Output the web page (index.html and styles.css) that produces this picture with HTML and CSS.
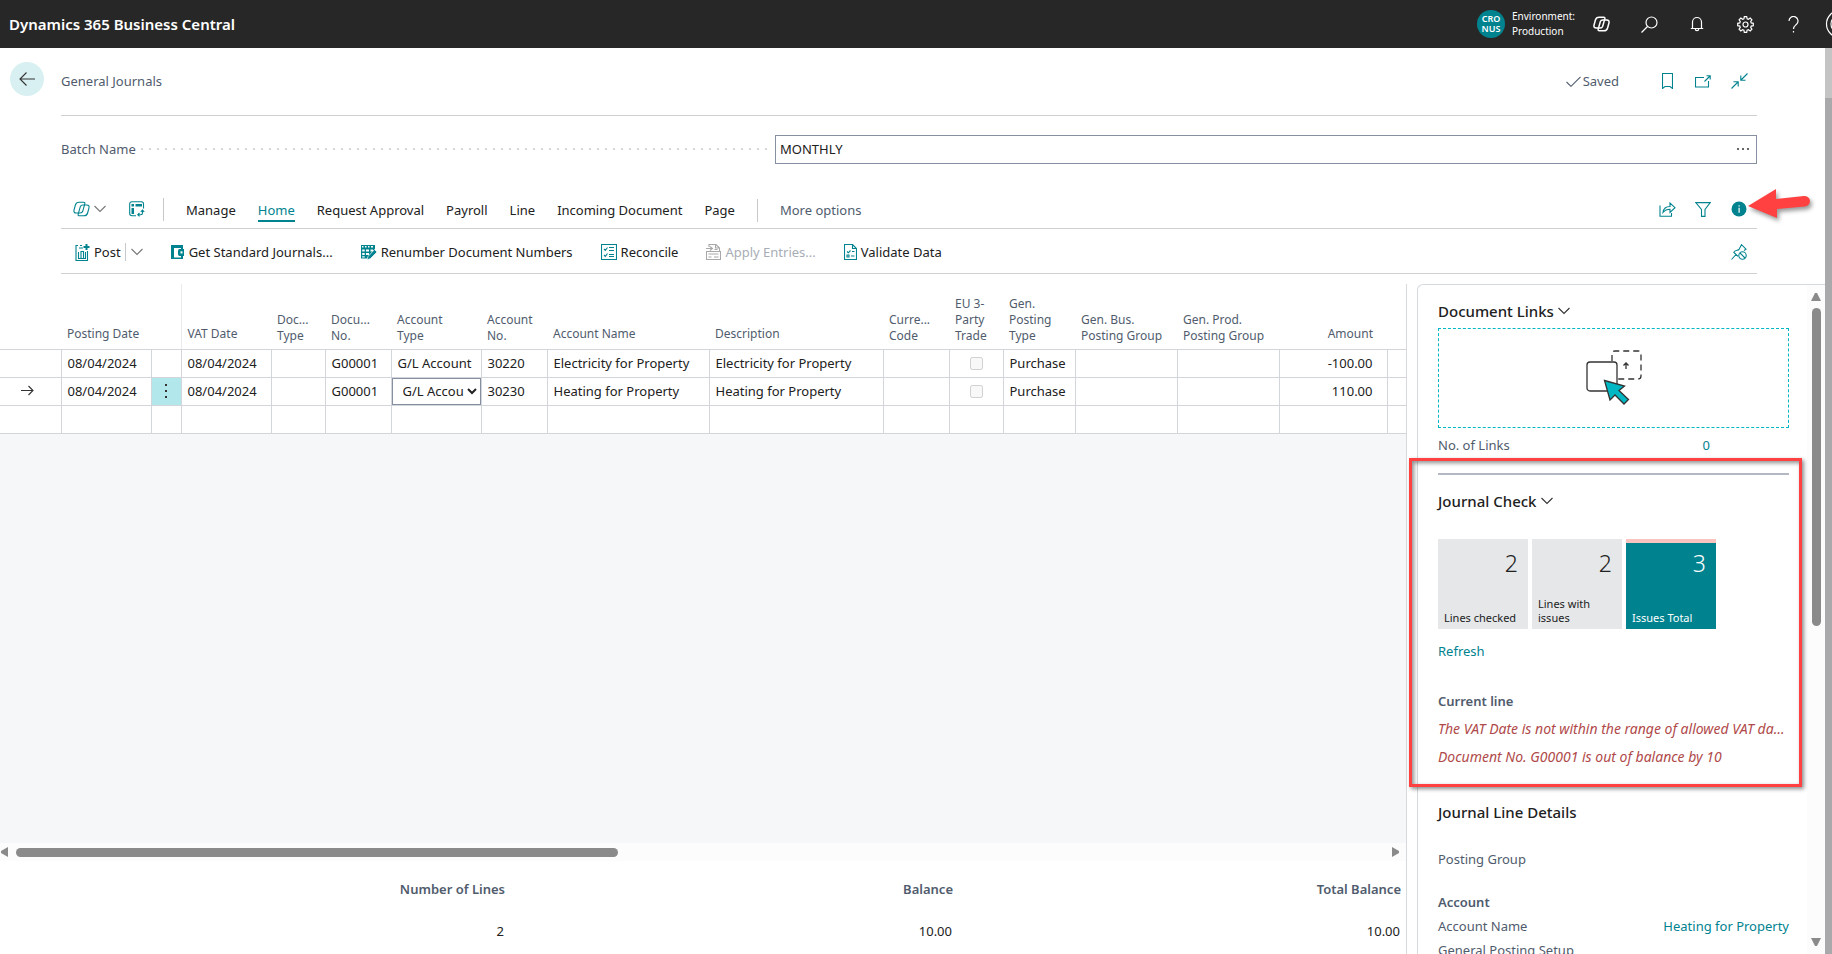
FILE: index.html
```html
<!DOCTYPE html>
<html lang="en">
<head>
  <meta charset="UTF-8" />
  <title>General Journals - Dynamics 365 Business Central</title>
  <link rel="stylesheet" href="styles.css">
</head>
<body>
  <svg class="defs" width="0" height="0" aria-hidden="true">
    <symbol id="copilot" viewBox="0 0 17 16">
      <path d="M6 1.2h4.6q1.7 0 1.2 1.7l-2.1 7.4Q9.1 12 7.2 12H3.2Q.5 12 1 9.2L2.4 4Q3.2 1.2 6 1.2z"/>
      <path transform="rotate(180 8.5 8)" d="M6 1.2h4.6q1.7 0 1.2 1.7l-2.1 7.4Q9.1 12 7.2 12H3.2Q.5 12 1 9.2L2.4 4Q3.2 1.2 6 1.2z"/>
    </symbol>
    <symbol id="chevron" viewBox="0 0 12 8"><path d="M.5 1L6 6.5 11.5 1"/></symbol>
  </svg>

  <header class="topbar">
    <a class="brand" href="#">Dynamics 365 Business Central</a>
    <div class="environment">
      <span class="company">CRO<br>NUS</span>
      <span>Environment:<br>Production</span>
    </div>
    <nav class="top-tools">
      <button aria-label="Copilot"><svg class="icon thick" width="17" height="16"><use href="#copilot"/></svg></button>
      <button aria-label="Search"><svg class="icon" width="17" height="17" viewBox="0 0 17 17"><circle cx="10.5" cy="6.5" r="5.5"/><path d="M6.5 10.5l-6 6"/></svg></button>
      <button aria-label="Notifications"><svg class="icon" width="14" height="16" viewBox="0 0 14 16"><path d="M2.500 12V6a4.500 4.500 0 0 1 9 0v6M.8 12.500h12.400M5.300 13a1.700 1.700 0 0 0 3.400 0"/></svg></button>
      <button aria-label="Settings"><svg class="icon" width="17" height="17" viewBox="0 0 17 17"><path d="M7.300.7h2.400l.4 2.100 1.300.5 1.800-1.200 1.700 1.700-1.200 1.800.5 1.300 2.100.4v2.400l-2.100.4-.5 1.300 1.200 1.800-1.700 1.700-1.800-1.200-1.300.5-.4 2.100H7.300l-.4-2.100-1.300-.5-1.800 1.200-1.700-1.700 1.200-1.800-.5-1.300-2.100-.4V7.300l2.100-.4.5-1.300-1.200-1.800 1.700-1.700 1.800 1.200 1.300-.5z"/><circle cx="8.5" cy="8.5" r="2.5"/></svg></button>
      <button aria-label="Help"><svg class="icon" width="11" height="17" viewBox="0 0 11 17"><path d="M1 5a4.500 4.500 0 1 1 7.500 3.300C6.500 10 5.500 10.500 5.500 13M5.500 15v1.500"/></svg></button>
      <button aria-label="Account"><svg class="icon" width="32" height="28" viewBox="0 0 32 28"><circle cx="15" cy="14" r="13.5"/><circle cx="15" cy="14" r="9"/></svg></button>
    </nav>
  </header>

  <div class="shell">
    <main class="page">
      <div class="page-head">
        <button class="back" aria-label="Back"><svg class="icon dark" width="16" height="14" viewBox="0 0 16 14"><path d="M7.500.5L1 7l6.500 6.500M1 7h15"/></svg></button>
        <h1>General Journals</h1>
        <span class="saved"><svg class="icon" width="15" height="11" viewBox="0 0 15 11"><path d="M.5 6L5 10.300 14.500.8"/></svg>Saved</span>
        <div class="side-tools">
          <button aria-label="Bookmark"><svg class="icon" width="11" height="16" viewBox="0 0 11 16"><path d="M.5.5h10v15L8 13.500H3L.5 15.500z"/></svg></button>
          <button aria-label="Open in new window"><svg class="icon" width="16" height="13" viewBox="0 0 16 13"><path d="M9 2.500H.5v9.500h13V6M9.500 6.500l5.500-5.500M11.500.8h3.700v3.700"/></svg></button>
          <button aria-label="Collapse"><svg class="icon" width="17" height="16" viewBox="0 0 17 16"><path d="M16.500.5L10 7M9.800 2.500v4.700h4.700M.5 15.500L7 9M2.500 8.800h4.700v4.700"/></svg></button>
        </div>
      </div>

      <div class="batch">
        <label for="batchName">Batch Name</label>
        <span class="dots"></span>
        <div class="lookup">
          <input type="text" id="batchName" value="MONTHLY">
          <button aria-label="Choose batch"><svg width="12" height="2" viewBox="0 0 12 2"><circle cx="1" cy="1" r="1"/><circle cx="6" cy="1" r="1"/><circle cx="11" cy="1" r="1"/></svg></button>
        </div>
      </div>

      <nav class="menu">
        <button class="copilot-menu" aria-label="Copilot actions"><svg class="icon" width="17" height="16"><use href="#copilot"/></svg><svg class="icon grey" width="12" height="8"><use href="#chevron"/></svg></button>
        <button class="layout-button" aria-label="Analyze"><svg class="icon" width="16" height="16" viewBox="0 0 16 16"><path d="M14.500 7.500V3q0-2.300-2.300-2.300H3Q.7.700.7 3v9.500q0 2.200 2.300 2.200h4M13.500 9.500V12q0 1.700-1.700 1.700H9M11.800 10.800l1.700-1.700 1.700 1.700M10.500 12l-1.700 1.700 1.700 1.700"/><path class="solid" d="M2.500 3H5v2.500H2.500zM6.500 3H13v2.500H6.500zM2.500 7H5v6H2.500z"/></svg></button>
        <span class="divider"></span>
        <div class="tabs">
          <button>Manage</button>
          <button class="active">Home</button>
          <button>Request Approval</button>
          <button>Payroll</button>
          <button>Line</button>
          <button>Incoming Document</button>
          <button>Page</button>
          <span class="divider"></span>
          <button class="more">More options</button>
        </div>
        <div class="side-tools">
          <button aria-label="Share"><svg class="icon" width="17" height="15" viewBox="0 0 17 15"><path d="M1 3.500v10.800h11.500V11M4 10.500C4.500 6.500 7 4.500 11 4.500V1l5 4.700-5 4.800V7.300C8 7.300 6 8 4 10.500z"/></svg></button>
          <button aria-label="Filter"><svg class="icon" width="16" height="15" viewBox="0 0 16 15"><path d="M.7.6h14.600L10 7.500v6.900H6.500V7.500z"/></svg></button>
          <button aria-label="Details pane"><svg width="16" height="16" viewBox="0 0 16 16"><circle cx="8" cy="8" r="7.5"/><path fill="#fff" d="M7.500 4.300h1.200v1.300H7.500zM7.500 6.800h1.200v5H7.500z"/></svg></button>
        </div>
        <svg class="pointer" width="72" height="38" viewBox="0 0 72 38"><path fill="#ff4141" d="M2 20L30 3v10l28-3q5 0 6 4.500 0 5-5 6L31 23v9z"/></svg>
      </nav>

      <div class="actions">
        <div class="split">
          <button class="action"><svg class="icon" width="15" height="17" viewBox="0 0 15 17"><path d="M3 1.500H1v15h11.500V7M5 1.500h2M4 4h4M3.500 14.500V8M6 14V7.500h2.500V14M10.500 8v6.500M3 14.500h8"/><path stroke-width="2" d="M11.500 0v6M8.500 3h6"/></svg>Post</button>
          <span class="divider"></span>
          <button class="more-post" aria-label="More posting actions"><svg class="icon grey" width="12" height="8"><use href="#chevron"/></svg></button>
        </div>
        <button class="action"><svg width="14" height="15" viewBox="0 0 14 15"><path fill-rule="evenodd" d="M0 0h12v4h1v7h-1v3H0zM3 3v9.500h7V11H8.500Q7 11 7 9V6q0-2 1.500-2H10V3z"/><path fill="#fff" d="M9.500 6.300h2v2.200h-2z"/></svg>Get Standard Journals...</button>
        <button class="action"><svg width="16" height="15" viewBox="0 0 16 15"><path fill-rule="evenodd" d="M0 0h14v6l-6 7.500H0zM1 1v1.500h1.500V1zM4 1v1.500h1.500V1zM7 1v1.500h1.500V1zM10 1v1.500h2V1zM1.200 4.500v2h2.500v-2zM5 4.500v2h3v-2zM9.500 4.500v2H12v-2zM1.200 8v2h2.500V8zM5 8v2h3V8zM1.200 11.200v1.300h2.500v-1.300z"/><path d="M13.500 4.500L16 7l-6.500 6.500L6 15l1-3.500z" stroke="#fff" stroke-width=".7"/></svg>Renumber Document Numbers</button>
        <button class="action"><svg class="icon" width="16" height="16" viewBox="0 0 16 16"><path d="M.5.5h15v15H.5zM8 3.500h5M8 6.500h5M8 10.500h5M8 12.500h5M3 5l1.300 1.300L6.500 3.500M3 11l1.300 1.300L6.500 9.500"/></svg>Reconcile</button>
        <button class="action" disabled><svg class="icon" width="15" height="16" viewBox="0 0 15 16"><path d="M3 3V.5h7L13.500 4v3M9.500.5V4h4M.5 7.500h14v8H.5zM2.500 10h10M2.500 13h3M8 13h4.500M0 4.500h6M4 2.500l2.500 2L4 6.500M8.500 5.500h3"/></svg>Apply Entries...</button>
        <button class="action"><svg class="icon" width="13" height="16" viewBox="0 0 13 16"><path d="M.5.5h8l4 4v11H.5zM8.500.5v4h4M3 7.500l1.300 1.300L6.500 6.500M8 7.500h2.500M3 11h2v2H3zM7 12h3.500"/></svg>Validate Data</button>
        <div class="side-tools">
          <button aria-label="Unpin"><svg class="icon" width="16" height="16" viewBox="0 0 16 16"><path d="M.5 15.500L5 10.500M2.500 8L7 12.300M3 7.700C5 6 7 6.500 8 5.500L10.500.7 15 5.200l-2 1.300"/><circle cx="11.500" cy="11.500" r="3.700"/><path d="M9 9l5 5"/></svg></button>
        </div>
      </div>

      <div class="content">
        <section class="lines">
          <div class="table-wrap">
            <table>
              <colgroup>
                <col class="w61"><col class="w90"><col class="w30"><col class="w90"><col class="w54"><col class="w66"><col class="w90"><col class="w66"><col class="w162"><col class="w174"><col class="w66"><col class="w54"><col class="w72"><col class="w102"><col class="w102"><col class="w108"><col>
              </colgroup>
              <thead>
                <tr>
                  <th></th><th>Posting Date</th><th class="frozen"></th><th>VAT Date</th><th class="wrap">Doc...<br>Type</th><th class="wrap">Docu...<br>No.</th><th class="wrap">Account<br>Type</th><th class="wrap">Account<br>No.</th><th>Account Name</th><th>Description</th><th class="wrap">Curre...<br>Code</th><th class="wrap">EU 3-<br>Party<br>Trade</th><th class="wrap">Gen.<br>Posting<br>Type</th><th class="wrap">Gen. Bus.<br>Posting Group</th><th class="wrap">Gen. Prod.<br>Posting Group</th><th class="amount">Amount</th><th></th>
                </tr>
              </thead>
              <tbody>
                <tr>
                  <td></td><td>08/04/2024</td><td></td><td>08/04/2024</td><td></td><td>G00001</td><td>G/L Account</td><td>30220</td><td>Electricity for Property</td><td>Electricity for Property</td><td></td><td class="check"><input type="checkbox" aria-label="EU 3-Party Trade" disabled></td><td>Purchase</td><td></td><td></td><td class="amount">-100.00</td><td></td>
                </tr>
                <tr>
                  <td class="marker"><svg class="icon dark" width="13" height="11" viewBox="0 0 13 11"><path d="M0 5.500h12M7.500 1L12 5.500 7.500 10"/></svg></td><td>08/04/2024</td><td class="row-menu"><button aria-label="Row options"><svg width="3" height="14" viewBox="0 0 3 14"><path d="M0 0h2v2H0zM0 6h2v2H0zM0 12h2v2H0z"/></svg></button></td><td>08/04/2024</td><td></td><td>G00001</td><td class="edit"><select aria-label="Account Type"><option>G/L Account</option></select></td><td>30230</td><td>Heating for Property</td><td>Heating for Property</td><td></td><td class="check"><input type="checkbox" aria-label="EU 3-Party Trade" disabled></td><td>Purchase</td><td></td><td></td><td class="amount">110.00</td><td></td>
                </tr>
                <tr>
                  <td></td><td></td><td></td><td></td><td></td><td></td><td></td><td></td><td></td><td></td><td></td><td></td><td></td><td></td><td></td><td></td><td></td>
                </tr>
              </tbody>
            </table>
          </div>
          <div class="hscroll">
            <svg width="8" height="10" viewBox="0 0 8 10"><path d="M8 0v10L1 6V4z"/></svg>
            <div class="htrack"><div class="hthumb"></div></div>
            <svg width="8" height="10" viewBox="0 0 8 10"><path d="M0 0v10l7-4V4z"/></svg>
          </div>
          <div class="totals">
            <div><strong>Number of Lines</strong><span>2</span></div>
            <div><strong>Balance</strong><span>10.00</span></div>
            <div><strong>Total Balance</strong><span>10.00</span></div>
          </div>
        </section>

        <aside class="factbox">
          <div class="facts">
            <section>
              <h2>Document Links<svg class="icon dark" width="12" height="8"><use href="#chevron"/></svg></h2>
              <div class="dropzone">
                <svg class="drop-icon" width="56" height="56" viewBox="0 0 56 56">
                  <path stroke-dasharray="6 4" d="M26 11V4q0-3 3-3h23q3 0 3 3v22q0 3-3 3H32"/>
                  <rect x="1" y="12" width="30" height="29" rx="3"/>
                  <path d="M40 19v-6M37.500 15.500L40 13l2.500 2.500"/>
                  <path fill="#00b7c3" d="M18.500 30.500l20 5.500-5.500 4.500 9.500 9-4.500 4.500-9-9-5 5z"/>
                </svg>
              </div>
              <div class="fact links"><span>No. of Links</span><a href="#">0</a></div>
            </section>
            <section class="journal-check">
              <h2>Journal Check<svg class="icon dark" width="12" height="8"><use href="#chevron"/></svg></h2>
              <div class="tiles">
                <button class="tile"><b>2</b><span>Lines checked</span></button>
                <button class="tile"><b>2</b><span>Lines with issues</span></button>
                <button class="tile alert"><b>3</b><span>Issues Total</span></button>
              </div>
              <a class="refresh" href="#">Refresh</a>
              <h3>Current line</h3>
              <p class="error">The VAT Date is not within the range of allowed VAT dates.</p>
              <p class="error">Document No. G00001 is out of balance by 10</p>
              <div class="highlight"></div>
            </section>
            <section class="details">
              <h2>Journal Line Details</h2>
              <div class="fact group"><span>Posting Group</span></div>
              <h3>Account</h3>
              <div class="fact"><span>Account Name</span><a href="#">Heating for Property</a></div>
              <div class="fact"><span>General Posting Setup</span></div>
            </section>
          </div>
          <div class="vscroll">
            <svg width="10" height="8" viewBox="0 0 10 8"><path d="M4 0h2l4 8H0z"/></svg>
            <div class="vtrack"><div class="vthumb"></div></div>
            <svg width="10" height="8" viewBox="0 0 10 8"><path d="M0 0h10L6 8H4z"/></svg>
          </div>
        </aside>
      </div>
    </main>
    <div class="backdrop"></div>
  </div>
</body>
</html>
```
FILE: styles.css
```css
* {
  box-sizing: border-box;
}
body {
  margin: 0;
  height: 100vh;
  display: flex;
  flex-direction: column;
  overflow: hidden;
  font-family: "Noto Sans", "Open Sans", sans-serif;
  font-size: 13px;
  line-height: 20px;
  color: #212121;
  background: #fff;
}
h1, h2, h3, p {
  margin: 0;
}
button {
  padding: 0;
  border: none;
  background: none;
  font: inherit;
  color: inherit;
  white-space: nowrap;
  cursor: pointer;
}
a {
  color: #00838f;
  text-decoration: none;
}
svg {
  flex: none;
  fill: #00838f;
}
.defs {
  position: absolute;
}
.icon {
  fill: none;
  stroke: #00838f;
  stroke-width: 1.1;
}
.icon .solid {
  fill: #00838f;
  stroke: none;
}
.icon.grey {
  stroke: #777;
}
.icon.dark {
  stroke: #333;
}

/* top bar */
.topbar {
  flex: none;
  display: flex;
  align-items: center;
  height: 48px;
  padding-left: 9px;
  background: #272727;
  color: #fff;
  overflow: hidden;
}
.brand {
  color: #fff;
  font-size: 15px;
  font-weight: 600;
}
.environment {
  display: flex;
  align-items: center;
  gap: 7px;
  margin-left: auto;
  width: 100px;
  font-size: 10px;
  line-height: 15px;
}
.company {
  width: 28px;
  height: 28px;
  padding-top: 4px;
  border-radius: 50%;
  background: #00838f;
  font-size: 9px;
  font-weight: 600;
  line-height: 10px;
  text-align: center;
}
.top-tools {
  display: flex;
  margin-right: -33px;
}
.top-tools button {
  display: flex;
  align-items: center;
  justify-content: center;
  width: 48px;
  height: 48px;
}
.top-tools .icon {
  stroke: #fff;
  stroke-width: 1.2;
}
.top-tools .thick {
  stroke-width: 1.5;
}

/* page */
.shell {
  flex: 1;
  display: flex;
  min-height: 0;
}
.page {
  flex: 1;
  display: flex;
  flex-direction: column;
  min-width: 0;
}
.backdrop {
  width: 7px;
  border-top: 50px solid #c4c4c4;
  background: #a9a9ab;
}
.page-head, .menu, .actions, .batch {
  flex: none;
  display: flex;
  align-items: center;
  margin: 0 68px 0 61px;
}
.page-head {
  height: 68px;
  margin-left: 10px;
  padding-bottom: 2px;
  background: linear-gradient(#d0d0d0, #d0d0d0) 51px 100% / 100% 1px no-repeat;
}
.back {
  display: flex;
  align-items: center;
  justify-content: center;
  width: 34px;
  height: 34px;
  margin-bottom: 4px;
  border-radius: 50%;
  background: #d8f0f2;
}
h1 {
  margin-left: 17px;
  font-size: 13px;
  font-weight: 400;
  color: #505c6d;
}
.saved {
  display: flex;
  align-items: center;
  gap: 2px;
  margin-left: auto;
  margin-right: 30px;
  color: #505c6d;
}
.saved .icon {
  stroke: #505c6d;
}
.side-tools {
  display: flex;
  margin-left: auto;
}
.saved + .side-tools {
  margin-left: 0;
}
.side-tools button {
  display: flex;
  align-items: center;
  justify-content: center;
  width: 36px;
  height: 24px;
}
.batch {
  height: 66px;
}
.batch label {
  color: #505c6d;
}
.dots {
  flex: 1;
  height: 2px;
  margin: 0 8px 0 5px;
  background: repeating-linear-gradient(90deg, #d5d5d5 0 2px, transparent 2px 8px);
}
.lookup {
  display: flex;
  width: 57.9%;
  height: 29px;
  border: 1px solid #8790a0;
}
.lookup input {
  flex: 1;
  padding: 0 4px;
  border: none;
  outline: none;
  font: inherit;
  color: inherit;
}
.lookup button {
  display: flex;
  align-items: center;
  padding: 0 7px;
}
.lookup svg, .row-menu svg {
  fill: #333;
}

/* action bar */
.menu {
  position: relative;
  height: 47px;
  padding-top: 8px;
  border-bottom: 1px solid #d0d0d0;
}
.copilot-menu {
  display: flex;
  align-items: center;
  gap: 4px;
  margin-left: 12px;
}
.layout-button {
  display: flex;
  margin: 0 18px 0 23px;
}
.divider {
  width: 1px;
  height: 23px;
  background: #c8c8c8;
}
.tabs {
  display: flex;
  align-items: center;
  gap: 22px;
  margin-left: 22px;
  padding-top: 2px;
}
.tabs .active {
  color: #00838f;
  box-shadow: 0 2px #00838f;
}
.tabs .more {
  color: #505c6d;
}
.pointer {
  position: absolute;
  right: -61px;
  top: 4px;
  filter: drop-shadow(2px 3px 2px rgba(0, 0, 0, 0.4));
}
.actions {
  height: 45px;
  gap: 28px;
  padding: 2px 0 0 14px;
  border-bottom: 1px solid #d0d0d0;
}
.split, .action, .more-post {
  display: flex;
  align-items: center;
}
.action {
  gap: 4px;
}
.action:disabled {
  color: #a8adb5;
}
.action:disabled .icon {
  stroke: #a8a8a8;
}
.split .divider {
  height: 18px;
  margin: 0 5px 0 4px;
}

/* journal lines */
.content {
  flex: 1;
  display: flex;
  min-height: 0;
  padding-top: 10px;
}
.lines {
  flex: 1;
  display: flex;
  flex-direction: column;
  min-width: 0;
  margin-right: 10px;
  border-right: 1px solid #d6dade;
}
.table-wrap {
  flex: 1;
  min-height: 0;
  background: #f5f7f9;
}
table {
  width: 100%;
  table-layout: fixed;
  border-collapse: collapse;
  background: #fff;
}
.w30 { width: 30px; }
.w54 { width: 54px; }
.w61 { width: 61px; }
.w66 { width: 66px; }
.w72 { width: 72px; }
.w90 { width: 90px; }
.w102 { width: 102px; }
.w108 { width: 108px; }
.w162 { width: 162px; }
.w174 { width: 174px; }
th {
  height: 65px;
  padding: 0 0 7px 6px;
  border-bottom: 1px solid #d2d5d9;
  vertical-align: bottom;
  text-align: left;
  font-size: 12px;
  font-weight: 400;
  line-height: 16px;
  color: #505c6d;
  white-space: nowrap;
}
th.wrap {
  padding-bottom: 5px;
}
th.frozen {
  border-right: 1px solid #e8eaec;
}
th.amount, td.amount {
  padding-right: 14px;
  text-align: right;
}
td {
  height: 28px;
  padding: 0 0 0 6px;
  border: 1px solid #d2d5d9;
  white-space: nowrap;
}
td:first-child {
  border-left: none;
}
td:last-child {
  border-right: none;
}
td.marker {
  padding: 0 6px 0 0;
  text-align: center;
}
td.row-menu {
  padding: 0;
  background: #b2e8ec;
}
.row-menu button {
  display: flex;
  align-items: center;
  justify-content: center;
  width: 100%;
  height: 26px;
}
td.edit {
  padding: 0;
}
.edit select {
  display: block;
  width: 100%;
  height: 27px;
  padding: 0 0 0 6px;
  border: 1px solid #8790a0;
  background: #fff;
  font: inherit;
  color: inherit;
}
td.check {
  padding: 0;
  text-align: center;
}
.check input {
  display: block;
  margin: 0 auto;
}
.hscroll {
  flex: none;
  display: flex;
  align-items: center;
  height: 18px;
  padding-right: 6px;
  background: #fcfcfc;
}
.hscroll svg, .vscroll svg {
  fill: #8a8a8a;
}
.htrack {
  flex: 1;
  margin: 0 8px;
}
.hthumb {
  width: 44%;
  height: 9px;
  border-radius: 5px;
  background: #8a8a8a;
}
.totals {
  flex: none;
  display: grid;
  grid-template-columns: repeat(3, 1fr);
  height: 93px;
  padding: 18px 5px 0 57px;
  text-align: right;
}
.totals div {
  display: flex;
  flex-direction: column;
  gap: 22px;
}
.totals strong {
  font-weight: 600;
  color: #505c6d;
}
.totals span {
  padding-right: 1px;
}

/* fact boxes */
.factbox {
  display: flex;
  width: 408px;
  border-top: 1px solid #d6dade;
  border-left: 1px solid #d6dade;
  border-radius: 6px 0 0 0;
}
.facts {
  flex: 1;
  min-width: 0;
  padding: 14px 18px 0 20px;
}
h2 {
  display: flex;
  align-items: center;
  gap: 4px;
  font-size: 15px;
  font-weight: 500;
  line-height: 24px;
}
h3 {
  font-size: 13px;
  font-weight: 600;
  line-height: 24px;
  color: #505c6d;
}
.dropzone {
  display: flex;
  align-items: center;
  justify-content: center;
  height: 100px;
  margin-top: 5px;
  border: 1px dashed #00b7c3;
}
.drop-icon {
  fill: #fff;
  stroke: #333;
  stroke-width: 1.3;
}
.fact {
  display: flex;
  justify-content: space-between;
  line-height: 24px;
  color: #505c6d;
}
.links {
  padding: 5px 79px 16px 0;
}
.journal-check {
  position: relative;
  padding-top: 14px;
  border-top: 2px solid #b4b8c4;
}
.tiles {
  display: flex;
  gap: 4px;
  margin-top: 26px;
}
.tile {
  display: flex;
  flex-direction: column;
  justify-content: space-between;
  width: 90px;
  height: 90px;
  padding: 7px 6px 4px;
  border-top: 4px solid #e5e7e9;
  background: #e5e7e9;
  font-size: 11px;
  line-height: 14px;
  text-align: left;
  white-space: normal;
}
.tile b {
  align-self: flex-end;
  padding-right: 4px;
  font-size: 23px;
  font-weight: 300;
  line-height: 26px;
}
.tile.alert {
  border-top-color: #f9c4c0;
  background: #00838f;
  color: #fff;
}
.refresh {
  display: block;
  margin: 10px 0 26px;
  line-height: 24px;
}
.error {
  padding-right: 2px;
  overflow: hidden;
  text-overflow: ellipsis;
  white-space: nowrap;
  font-size: 14px;
  font-style: italic;
  line-height: 28px;
  color: #b04a4a;
}
.journal-check h3 + .error {
  margin-top: 2px;
}
.highlight {
  position: absolute;
  top: -17px;
  right: -13px;
  bottom: -16px;
  left: -29px;
  border: 3px solid #ff4141;
  box-shadow: 2px 2px 4px rgba(0, 0, 0, 0.45), inset 2px 2px 4px rgba(0, 0, 0, 0.45);
  pointer-events: none;
}
.details {
  padding-top: 29px;
}
.group {
  margin: 23px 0 19px;
}
.vscroll {
  display: flex;
  flex-direction: column;
  align-items: center;
  width: 18px;
  padding: 8px 2px;
  background: #fcfcfc;
}
.vtrack {
  flex: 1;
  margin: 7px 0;
}
.vthumb {
  width: 9px;
  height: 51%;
  border-radius: 5px;
  background: #8a8a8a;
}
```
